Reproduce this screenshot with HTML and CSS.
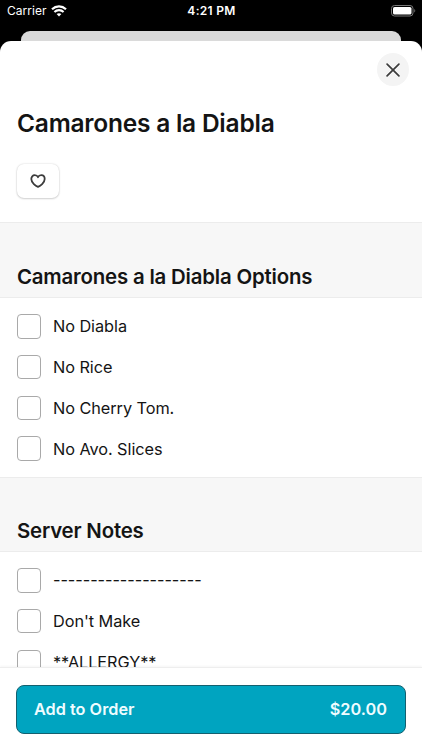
FILE: index.html
```html
<!DOCTYPE html>
<html lang="en">
<head>
  <meta charset="UTF-8">
  <meta name="viewport" content="width=device-width, initial-scale=1.0">
  <title>Camarones a la Diabla</title>
  <link rel="stylesheet" href="styles.css">
</head>
<body>
  <div class="status-bar">
    <div class="carrier">
      <span>Carrier</span>
      <svg class="wifi" viewBox="0 0 16 12" width="16" height="12">
        <path d="M1 4.2C5 .4 11 .4 15 4.2" fill="none" stroke="#fff" stroke-width="2.2"/>
        <path d="M3.4 6.9C6 4.5 10 4.5 12.6 6.9" fill="none" stroke="#fff" stroke-width="2.1"/>
        <path d="M8 11.5L5.6 9.1C7 7.9 9 7.9 10.4 9.1Z" fill="#fff"/>
      </svg>
    </div>
    <div class="time">4:21 PM</div>
    <div class="battery">
      <svg viewBox="0 0 25 12" width="25" height="12">
        <rect x=".5" y=".5" width="21.5" height="10.5" rx="3" fill="none" stroke="#777"/>
        <rect x="2" y="2" width="18.5" height="7.5" rx="1.6" fill="#fff"/>
        <path d="M23.3 4v3.6c1.3-.6 1.3-3 0-3.6z" fill="#777"/>
      </svg>
    </div>
  </div>

  <div class="back-card"></div>

  <div class="sheet">
    <div class="scroll">
      <header class="item-header">
        <button class="close" aria-label="Close">
          <svg viewBox="0 0 14 14" width="14" height="14">
            <path d="M1.1 1.1L12.9 12.9M12.9 1.1L1.1 12.9" stroke="#3c3c3c" stroke-width="1.7" stroke-linecap="round"/>
          </svg>
        </button>
        <h1>Camarones a la Diabla</h1>
        <button class="favorite" aria-label="Favorite">
          <svg viewBox="0 0 16 14" width="16" height="14">
            <path d="M8 12.8C5.9 11.9 1.3 8.9 1.3 5.1C1.3 2.8 2.8 1.2 4.7 1.2C6.1 1.2 7.4 1.9 8 3.2C8.6 1.9 9.9 1.2 11.3 1.2C13.2 1.2 14.7 2.8 14.7 5.1C14.7 8.9 10.1 11.9 8 12.8Z" fill="none" stroke="#3c3c3c" stroke-width="1.8" stroke-linejoin="round"/>
          </svg>
        </button>
      </header>

      <section>
        <h2>Camarones a la Diabla Options</h2>
        <ul class="options">
          <li><span class="checkbox"></span>No Diabla</li>
          <li><span class="checkbox"></span>No Rice</li>
          <li><span class="checkbox"></span>No Cherry Tom.</li>
          <li><span class="checkbox"></span>No Avo. Slices</li>
        </ul>
      </section>

      <section>
        <h2 class="notes-title">Server Notes</h2>
        <ul class="options">
          <li><span class="checkbox"></span>--------------------</li>
          <li><span class="checkbox"></span>Don't Make</li>
          <li><span class="checkbox"></span>**ALLERGY**</li>
        </ul>
      </section>
    </div>

    <footer class="footer">
      <button class="add">
        <span>Add to Order</span>
        <span class="price">$20.00</span>
      </button>
    </footer>
  </div>
</body>
</html>
```

FILE: styles.css
```css
* {
  box-sizing: border-box;
}

html, body {
  height: 100%;
  margin: 0;
}

body {
  display: flex;
  flex-direction: column;
  overflow: hidden;
  background: #000;
  color: #141414;
  font-family: Inter, "Liberation Sans", sans-serif;
}

button {
  display: flex;
  align-items: center;
  padding: 0;
  border: none;
  font-family: inherit;
}

/* status bar */
.status-bar {
  display: grid;
  grid-template-columns: 1fr auto 1fr;
  align-items: center;
  height: 31px;
  padding: 0 6px 10px 7px;
  color: #fff;
  font-size: 12px;
}

.carrier {
  display: flex;
  align-items: center;
  gap: 4px;
  letter-spacing: 0.05px;
}

.time {
  font-weight: 600;
  letter-spacing: 0.3px;
}

.battery {
  display: flex;
  justify-content: flex-end;
}

.back-card {
  height: 10px;
  margin: 0 21px;
  background: #dadada;
  border-radius: 9px 9px 0 0;
}

/* sheet */
.sheet {
  display: flex;
  flex: 1;
  flex-direction: column;
  min-height: 0;
  overflow: hidden;
  background: #fff;
  border-radius: 11px 11px 0 0;
}

.scroll {
  flex: 1;
  min-height: 0;
  overflow: hidden;
}

.item-header {
  display: flex;
  flex-direction: column;
  height: 181px;
  padding: 12px 13px 0 17px;
}

.close {
  justify-content: center;
  align-self: flex-end;
  width: 32px;
  height: 33px;
  background: #f4f4f4;
  border-radius: 50%;
}

h1 {
  margin: 21px 0 25px;
  font-size: 24.5px;
  font-weight: 600;
  line-height: 32px;
  letter-spacing: -0.23px;
}

.favorite {
  justify-content: center;
  width: 42px;
  height: 34px;
  background: #fff;
  border-radius: 7px;
  box-shadow: 0 0 2px rgba(0, 0, 0, 0.18), 0 1px 2px rgba(0, 0, 0, 0.14);
}

h2 {
  height: 76px;
  margin: 0;
  padding: 41px 17px 0;
  background: #f7f7f7;
  border-top: 1px solid #ececec;
  border-bottom: 1px solid #ececec;
  font-size: 20.4px;
  font-weight: 600;
  line-height: 26px;
  letter-spacing: -0.18px;
}

.notes-title {
  height: 75px;
  padding-top: 40px;
}

.options {
  margin: 0;
  padding: 8px 16.5px;
  list-style: none;
}

.options li {
  display: flex;
  align-items: center;
  gap: 12px;
  height: 40.75px;
  font-size: 16.3px;
  letter-spacing: -0.06px;
}

.checkbox {
  width: 24.5px;
  height: 24.5px;
  border: 1px solid #a9a9a9;
  border-radius: 4px;
}

/* bottom bar */
.footer {
  height: 83px;
  padding: 17px 16px 0;
  background: #fff;
  border-top: 1px solid #eee;
  box-shadow: 0 -1px 2px rgba(0, 0, 0, 0.04);
}

.add {
  justify-content: space-between;
  width: 390px;
  height: 49px;
  padding: 0 18px 2px 17px;
  background: #00a4c0;
  border: 1px solid #13606f;
  border-radius: 8px;
  color: #eefcff;
  font-size: 16.3px;
  font-weight: 600;
}
```
